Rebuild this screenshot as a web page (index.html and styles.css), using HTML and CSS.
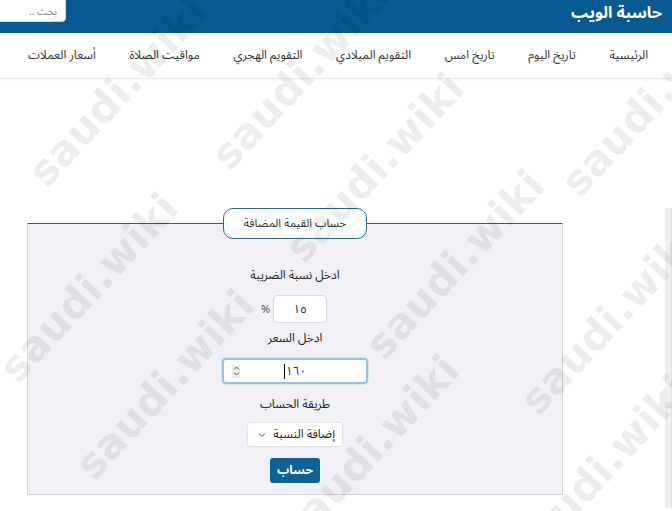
FILE: index.html
```html
<!DOCTYPE html>
<html lang="ar" dir="rtl">
<head>
    <meta charset="UTF-8">
    <meta name="viewport" content="width=device-width, initial-scale=1.0">
    <title>حساب القيمة المضافة - حاسبة الويب</title>
    <link rel="stylesheet" href="styles.css">
</head>
<body>

    <header class="topbar">
        <a class="brand" href="#">حاسبة الويب</a>
        <input class="search" type="text" placeholder="بحث ..">
    </header>

    <nav class="menu">
        <a href="#">الرئيسية</a>
        <a href="#">تاريخ اليوم</a>
        <a href="#">تاريخ امس</a>
        <a href="#">التقويم الميلادي</a>
        <a href="#">التقويم الهجري</a>
        <a href="#">مواقيت الصلاة</a>
        <a href="#">أسعار العملات</a>
    </nav>

    <div class="page">
        <aside class="side"></aside>

        <main class="main">
            <div class="calc-box">
                <div class="calc-title">حساب القيمة المضافة</div>

                <label class="field-label" for="rate">ادخل نسبة الضريبة</label>
                <div class="rate-row">
                    <input id="rate" class="rate-input" type="text" value="١٥">
                    <span class="percent">%</span>
                </div>

                <label class="field-label label-price">ادخل السعر</label>
                <div class="price-input">
                    <span class="price-value">١٦٠</span>
                    <span class="spinner">
                        <svg width="7" height="12" viewBox="0 0 7 12">
                            <path d="M1 4.5 L3.5 2 L6 4.5" fill="none" stroke="#555" stroke-width="1"/>
                            <path d="M1 7.5 L3.5 10 L6 7.5" fill="none" stroke="#555" stroke-width="1"/>
                        </svg>
                    </span>
                </div>

                <label class="field-label label-method">طريقة الحساب</label>
                <div class="select">
                    <span>إضافة النسبة</span>
                    <svg width="8" height="6" viewBox="0 0 8 6">
                        <path d="M1 1.5 L4 4.5 L7 1.5" fill="none" stroke="#444" stroke-width="1"/>
                    </svg>
                </div>

                <button class="btn" type="button">حساب</button>
            </div>
        </main>
    </div>

    <!-- watermark of the source screenshot -->
    <div class="wm">
        <span class="wm-1">saudi.wiki</span>
        <span class="wm-2">saudi.wiki</span>
        <span class="wm-3">saudi.wiki</span>
        <span class="wm-4">saudi.wiki</span>
        <span class="wm-5">saudi.wiki</span>
        <span class="wm-6">saudi.wiki</span>
        <span class="wm-7">saudi.wiki</span>
        <span class="wm-8">saudi.wiki</span>
        <span class="wm-9">saudi.wiki</span>
        <span class="wm-10">saudi.wiki</span>
    </div>

</body>
</html>
```

FILE: styles.css
```css
body {
    margin: 0;
    font-family: "Noto Sans Arabic", "Noto Sans", "DejaVu Sans", sans-serif;
    font-size: 12px;
    color: #333;
    background-color: #fff;
}
a {
    color: #333;
    text-decoration: none;
}

/* top bar */
.topbar {
    display: flex;
    justify-content: space-between;
    align-items: flex-start;
    height: 33px;
    padding-right: 10px;
    background-color: #075a91;
}
.brand {
    color: #fff;
    font-size: 16px;
    font-weight: bold;
    line-height: 26px;
}
.search {
    width: 70px;
    height: 26px;
    box-sizing: border-box;
    margin: -4px 0 0 -4px;
    padding: 4px 8px 0;
    border: 1px solid #d6d6d6;
    border-radius: 4px;
    font-family: inherit;
    font-size: 10px;
    color: #777;
}
.search::placeholder {
    color: #888;
}

/* menu */
.menu {
    display: flex;
    justify-content: space-between;
    align-items: center;
    height: 45px;
    padding: 0 24px 0 28px;
    border-bottom: 1px solid #ececec;
    box-shadow: 0 1px 2px rgba(0, 0, 0, 0.04);
}
.menu a {
    font-size: 12px;
    color: #333;
}

/* page */
.page {
    display: flex;
    justify-content: space-between;
    padding: 129px 0 0 27px;
}
.side {
    width: 6px;
    height: 300px;
    background-color: #efeff5;
    border-right: 1px solid #e2e2ea;
}
.main {
    width: 536px;
}

/* calculator box */
.calc-box {
    display: flex;
    flex-direction: column;
    align-items: center;
    margin-top: 15px;
    padding-bottom: 11px;
    background-color: #f0f0f6;
    border: 1px solid #d3d3da;
    border-top-color: #1f6384;
}
.calc-title {
    box-sizing: border-box;
    height: 31px;
    margin-top: -16px;
    padding: 0 20px;
    line-height: 29px;
    font-size: 11.5px;
    color: #333;
    background-color: #fff;
    border: 1px solid #2a6887;
    border-radius: 10px;
}
.field-label {
    margin-top: 28px;
    line-height: 18px;
    font-size: 12px;
    color: #222;
}
.label-price {
    margin-top: 7px;
}
.label-method {
    margin-top: 12px;
}

.rate-row {
    display: flex;
    align-items: center;
    gap: 3px;
    margin-top: 10px;
    margin-right: 2px;
}
.rate-input {
    box-sizing: border-box;
    width: 54px;
    height: 28px;
    border: 1px solid #dcdcdc;
    border-radius: 4px;
    text-align: center;
    font-family: inherit;
    font-size: 12px;
    color: #333;
    background-color: #fff;
}
.percent {
    font-size: 11px;
    color: #555;
}

.price-input {
    position: relative;
    box-sizing: border-box;
    display: flex;
    justify-content: center;
    align-items: center;
    width: 146px;
    height: 26px;
    margin-top: 10px;
    background-color: #fff;
    border: 2px solid #9cc3d8;
    border-radius: 4px;
    box-shadow: 0 0 0 1px #d3e4ee;
}
.price-value {
    padding-left: 1px;
    border-left: 1px solid #000;
    line-height: 15px;
    font-size: 12px;
    color: #333;
}
.spinner {
    position: absolute;
    left: 8px;
    top: 5px;
    display: flex;
    width: 8px;
    height: 13px;
    background-color: #ececec;
}

.select {
    box-sizing: border-box;
    display: flex;
    justify-content: space-between;
    align-items: center;
    width: 96px;
    height: 25px;
    margin-top: 8px;
    padding: 0 7px 0 10px;
    background-color: #fff;
    border: 1px solid #e3e3e3;
    border-radius: 3px;
    font-size: 12px;
    color: #222;
}

.btn {
    width: 50px;
    height: 25px;
    margin-top: 11px;
    padding: 0;
    border: 0;
    border-radius: 3px;
    background-color: #0b6294;
    color: #fff;
    font-family: inherit;
    font-size: 12px;
    font-weight: bold;
}

/* watermark */
.wm {
    position: fixed;
    top: 0;
    left: 0;
    right: 0;
    bottom: 0;
    overflow: hidden;
    pointer-events: none;
}
.wm span {
    position: absolute;
    width: 250px;
    height: 52px;
    line-height: 52px;
    text-align: center;
    direction: ltr;
    font-family: "DejaVu Sans", sans-serif;
    font-size: 42px;
    font-weight: bold;
    color: rgba(0, 0, 0, 0.07);
    transform: rotate(-47deg);
}
.wm-1 { left: -7px; top: 66px; }
.wm-2 { left: 176px; top: 49px; }
.wm-3 { left: 250px; top: 142px; }
.wm-4 { left: 526px; top: 76px; }
.wm-5 { left: -36px; top: 262px; }
.wm-6 { left: 40px; top: 359px; }
.wm-7 { left: 330px; top: 239px; }
.wm-8 { left: 485px; top: 294px; }
.wm-9 { left: 245px; top: 424px; }
.wm-10 { left: 475px; top: 444px; }
```
